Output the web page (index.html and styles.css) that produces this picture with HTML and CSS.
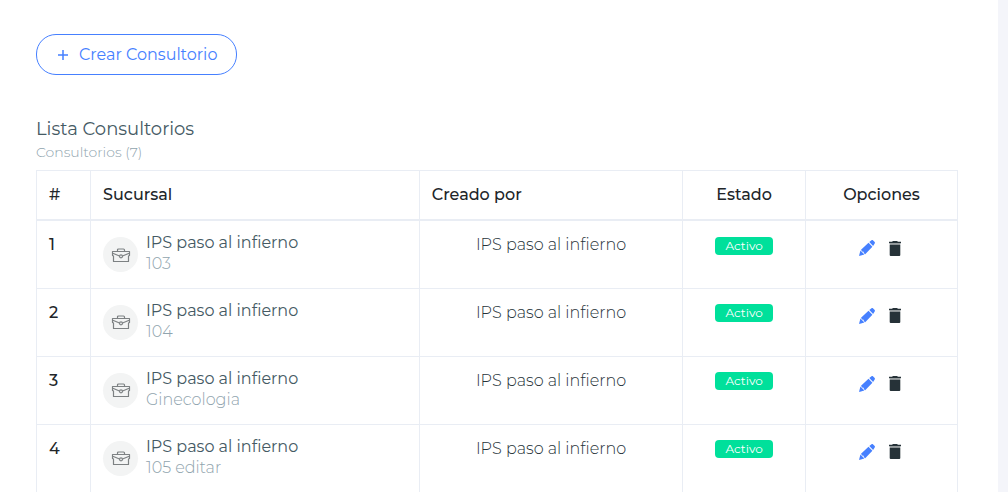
FILE: index.html
```html
<!DOCTYPE html>
<html lang="es">
<head>
<meta charset="utf-8">
<meta name="viewport" content="width=device-width, initial-scale=1">
<title>Consultorios</title>
<link rel="stylesheet" href="styles.css">
</head>
<body>
<svg class="sprite" aria-hidden="true">
  <symbol id="briefcase" viewBox="0 0 20 16">
    <g fill="none" stroke="#7d8183" stroke-width="1.200" stroke-linejoin="round">
      <path d="M1.500 4.500h17v4l-1 .6v5.400h-15V9.100l-1-.6zM6.500 4.500V3q0-1 1-1h5q1 0 1 1v1.500M1.800 6.200L8.500 9M18.200 6.200L11.500 9"/>
      <circle cx="10" cy="9.300" r="1.500" fill="#f3f4f4"/>
    </g>
  </symbol>
  <symbol id="pencil" viewBox="0 0 16 16">
    <path fill="#4680ff" d="M0 16l1.400-5.400 4 4zM2 9.700l7.500-6.900 3.900 4-7.200 7.500-1.300-1-.3-1.500-1.500-.3zM10.300 2.100L12.500.3c.6-.4 1-.4 1.400 0l1.800 1.800c.3.400.3.800 0 1.300l-1.600 2.600z"/>
  </symbol>
  <symbol id="trash" viewBox="0 0 12 15">
    <path fill="#263238" d="M0 .8h3L4 0h4l1 .8h3v1.400H0zM.7 4h10.600v10q0 1-1 1H1.700q-1 0-1-1z"/>
    <path fill="#8b9194" d="M.7 2.200h10.600V4H.7z"/>
  </symbol>
</svg>
<main class="panel">
  <button class="create" type="button"><svg class="plus" viewBox="0 0 10 10" aria-hidden="true"><path d="M5 0v10M0 5h10" stroke="currentColor" stroke-width="1.500"/></svg>Crear Consultorio</button>
  <h1 class="title">Lista Consultorios</h1>
  <p class="subtitle">Consultorios (7)</p>
  <table class="table">
    <colgroup><col class="col-num"><col class="col-branch"><col class="col-author"><col class="col-state"><col class="col-options"></colgroup>
    <thead>
      <tr><th scope="col">#</th><th scope="col">Sucursal</th><th scope="col">Creado por</th><th class="center" scope="col">Estado</th><th class="center" scope="col">Opciones</th></tr>
    </thead>
    <tbody>
      <tr>
        <th scope="row">1</th>
        <td><div class="branch"><span class="avatar"><svg><use href="#briefcase"/></svg></span><div><div class="name">IPS paso al infierno</div><div class="room">103</div></div></div></td>
        <td class="center">IPS paso al infierno</td>
        <td class="center"><span class="badge">Activo</span></td>
        <td><div class="actions"><button type="button" aria-label="Editar"><svg class="edit"><use href="#pencil"/></svg></button><button type="button" aria-label="Eliminar"><svg class="delete"><use href="#trash"/></svg></button></div></td>
      </tr>
      <tr>
        <th scope="row">2</th>
        <td><div class="branch"><span class="avatar"><svg><use href="#briefcase"/></svg></span><div><div class="name">IPS paso al infierno</div><div class="room">104</div></div></div></td>
        <td class="center">IPS paso al infierno</td>
        <td class="center"><span class="badge">Activo</span></td>
        <td><div class="actions"><button type="button" aria-label="Editar"><svg class="edit"><use href="#pencil"/></svg></button><button type="button" aria-label="Eliminar"><svg class="delete"><use href="#trash"/></svg></button></div></td>
      </tr>
      <tr>
        <th scope="row">3</th>
        <td><div class="branch"><span class="avatar"><svg><use href="#briefcase"/></svg></span><div><div class="name">IPS paso al infierno</div><div class="room">Ginecologia</div></div></div></td>
        <td class="center">IPS paso al infierno</td>
        <td class="center"><span class="badge">Activo</span></td>
        <td><div class="actions"><button type="button" aria-label="Editar"><svg class="edit"><use href="#pencil"/></svg></button><button type="button" aria-label="Eliminar"><svg class="delete"><use href="#trash"/></svg></button></div></td>
      </tr>
      <tr>
        <th scope="row">4</th>
        <td><div class="branch"><span class="avatar"><svg><use href="#briefcase"/></svg></span><div><div class="name">IPS paso al infierno</div><div class="room">105 editar</div></div></div></td>
        <td class="center">IPS paso al infierno</td>
        <td class="center"><span class="badge">Activo</span></td>
        <td><div class="actions"><button type="button" aria-label="Editar"><svg class="edit"><use href="#pencil"/></svg></button><button type="button" aria-label="Eliminar"><svg class="delete"><use href="#trash"/></svg></button></div></td>
      </tr>
    </tbody>
  </table>
</main>
</body>
</html>
```
FILE: styles.css
```css
* { box-sizing: border-box; }
body {
  margin: 0;
  background: #f4f5fa;
  font: 300 16px/24px Montserrat, Inter, sans-serif;
  color: #263238;
}
.sprite { position: absolute; width: 0; height: 0; }
.panel {
  min-height: 100vh;
  margin-right: 10px;
  padding: 34px 40px 0 36px;
  background: #fff;
}
.create {
  display: flex;
  align-items: center;
  gap: 11px;
  height: 41px;
  padding: 0 19px 0 21px;
  border: 1px solid #4680ff;
  border-radius: 20px;
  background: none;
  color: #4680ff;
  font: inherit;
  font-weight: 400;
}
.plus { width: 10px; height: 10px; }
.title {
  margin: 42px 0 0;
  font-size: 18px;
  line-height: 24px;
  font-weight: 400;
  color: #455a64;
}
.subtitle {
  margin: 0 0 6px;
  font-size: 14px;
  line-height: 23px;
  color: #90a4ae;
}
.table {
  width: 100%;
  table-layout: fixed;
  border-collapse: collapse;
}
.col-num { width: 54px; }
.col-branch { width: 35.700%; }
.col-author { width: 28.600%; }
.col-options { width: 16.500%; }
.table th, .table td {
  padding: 12px;
  border: 1px solid #e9edf4;
  text-align: left;
  vertical-align: top;
}
.table th { font-weight: 500; color: #212529; }
.table thead th { border-bottom-width: 2px; }
.table tbody tr { height: 68px; }
.table tbody td { padding-bottom: 0; }
.table .center { text-align: center; }
.branch { display: flex; gap: 8px; }
.avatar {
  display: grid;
  place-items: center;
  width: 35px;
  height: 35px;
  margin-top: 4px;
  border-radius: 50%;
  background: #f3f4f4;
}
.avatar svg { width: 20px; height: 16px; }
.name { line-height: 20px; }
.room { line-height: 22px; }
.name { color: #455a64; font-weight: 400; }
.room { color: #90a4ae; }
.badge {
  display: inline-block;
  padding: 0 10px;
  border-radius: 4px;
  background: #00e09b;
  color: #fff;
  font-size: 12px;
  line-height: 18px;
  font-weight: 400;
  vertical-align: middle;
}
.actions {
  display: flex;
  justify-content: center;
  align-items: center;
  gap: 14px;
  padding: 7px 3px 0 0;
}
.actions button {
  display: flex;
  padding: 0;
  border: 0;
  background: none;
}
.edit { width: 16px; height: 16px; }
.delete { width: 12px; height: 15px; }
```
